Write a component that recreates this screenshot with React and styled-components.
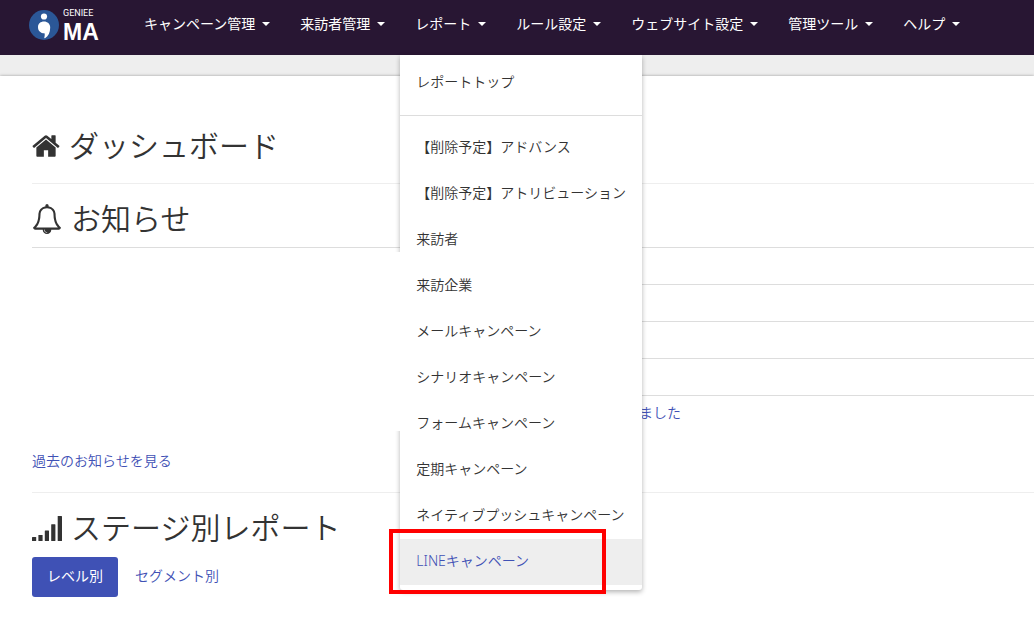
import React from "react";
import styled, { createGlobalStyle } from "styled-components";

const GlobalStyle = createGlobalStyle`
  * { box-sizing: border-box; }
  html { background: #fff; }
  body {
    margin: 0;
    overflow-x: hidden;
    color: #333;
    font: 350 14px/20px "Noto Sans", "Noto Sans CJK JP", sans-serif;
  }
  button { font: inherit; }
  a { color: #3f51b5; text-decoration: none; }
`;

const Navbar = styled.header`
  position: relative;
  z-index: 2;
  display: flex;
  height: 55px;
  padding-left: 29px;
  background: #281633;
  color: #fff;
`;

const Brand = styled.a`
  display: flex;
  gap: 3px;
  width: 100px;
  padding-top: 8px;
  color: #fff;
`;

const BrandMark = styled.svg`
  flex: none;
  width: 31px;
  height: 34px;
`;

const BrandText = styled.span`
  display: flex;
  flex-direction: column;
`;

const BrandCompany = styled.span`
  font-family: Roboto, sans-serif;
  font-weight: 400;
  font-size: 9px;
  line-height: 11px;
`;

const BrandProduct = styled.span`
  font-family: "Liberation Sans", sans-serif;
  font-size: 23px;
  line-height: 26px;
  font-weight: 700;
`;

const NavList = styled.ul`
  display: flex;
  margin: 0;
  padding: 0;
  list-style: none;
`;

const NavItem = styled.li`
  position: relative;
`;

const NavButton = styled.button`
  display: flex;
  align-items: center;
  gap: 7px;
  height: 48px;
  padding: 0 15px;
  border: 0;
  background: none;
  color: inherit;
  font-weight: 400;
  white-space: nowrap;
  cursor: pointer;
`;

const Caret = styled.span`
  border: 4px solid transparent;
  border-top-color: #fff;
  border-bottom: 0;
`;

const Menu = styled.div`
  position: absolute;
  top: 55px;
  left: 0;
  width: 242px;
  padding: 5px 0;
  border-radius: 0 0 3px 3px;
  background: #fff;
  box-shadow: 0 2px 5px rgba(0, 0, 0, 0.3);
`;

const MenuDivider = styled.hr`
  height: 1px;
  margin: 9px 0;
  border: 0;
  background: #ddd;
`;

const MenuLink = styled.a`
  position: relative;
  display: block;
  padding: 12px 16px 14px;
  background: ${(p) => (p.$active ? "#eee" : "transparent")};
  color: ${(p) => (p.$active ? "#3f51b5" : "#333")};
  white-space: nowrap;
`;

const Highlight = styled.span`
  position: absolute;
  top: -10px;
  left: -11px;
  width: 217px;
  height: 65px;
  border: 4px solid #f00;
`;

const Mask = styled.div`
  position: absolute;
  top: 197px;
  right: 100%;
  width: 368px;
  height: 179px;
  background: #fff;
`;

const Backdrop = styled.div`
  padding-top: 21px;
  background: #eee;
`;

const Page = styled.main`
  min-height: calc(100vh - 76px);
  padding: 50px 0 22px 32px;
  background: #fff;
  box-shadow: 0 0 3px rgba(0, 0, 0, 0.35);
`;

const Heading = styled.h2`
  display: flex;
  align-items: center;
  gap: 9px;
  margin: 0;
  font-size: 30px;
  line-height: 40px;
  font-weight: 350;
`;

const HeadingIcon = styled.svg`
  flex: none;
  width: ${(p) => p.$width}px;
  height: 30px;
  fill: #333;
`;

const Rule = styled.hr`
  height: 1px;
  margin: 17px 0 15px;
  border: 0;
  background: #eee;
`;

const NewsTable = styled.table`
  width: 100%;
  margin: 8px 0 19px;
  border-collapse: separate;
  border-spacing: 0;
`;

const NewsCell = styled.td`
  height: 37px;
  padding: 7px 0 9px 607px;
  border-top: 1px solid #ddd;
`;

const PastNews = styled.a`
  display: block;
  margin-bottom: 21px;
`;

const Tabs = styled.div`
  display: flex;
  gap: 2px;
  margin-top: 9px;
`;

const Tab = styled.button`
  height: 40px;
  padding: 0 15px 2px;
  border: 0;
  border-radius: 3px;
  background: ${(p) => (p.$active ? "#3f51b5" : "transparent")};
  color: ${(p) => (p.$active ? "#fff" : "#3f51b5")};
  font-weight: ${(p) => (p.$active ? 400 : 350)};
  cursor: pointer;
`;

const navItems = [
  "キャンペーン管理",
  "来訪者管理",
  "レポート",
  "ルール設定",
  "ウェブサイト設定",
  "管理ツール",
  "ヘルプ",
];

const reports = [
  "【削除予定】アドバンス",
  "【削除予定】アトリビューション",
  "来訪者",
  "来訪企業",
  "メールキャンペーン",
  "シナリオキャンペーン",
  "フォームキャンペーン",
  "定期キャンペーン",
  "ネイティブプッシュキャンペーン",
];

const news = ["", "", "", "", "ました"];

function HomeIcon() {
  return (
    <HeadingIcon $width={28} viewBox="64 0 1664 1792" aria-hidden="true">
      <path d="M1472 992v480q0 26-19 45t-45 19h-384v-384h-256v384h-384q-26 0-45-19t-19-45v-480q0-1 .5-3t.5-3l575-474 575 474q1 2 1 6zm223-69l-62 74q-8 9-21 11h-3q-13 0-21-7l-692-577-692 577q-12 8-24 7-13-2-21-11l-62-74q-8-10-7-23.5t11-21.5l719-599q32-26 76-26t76 26l244 204v-195q0-14 9-23t23-9h192q14 0 23 9t9 23v408l219 182q10 8 11 21.5t-7 23.5z" />
    </HeadingIcon>
  );
}

function BellIcon() {
  return (
    <HeadingIcon $width={30} viewBox="0 0 1792 1792" aria-hidden="true">
      <path d="M912 1696q0-16-16-16-59 0-101.5-42.5t-42.5-101.5q0-16-16-16t-16 16q0 73 51.5 124.5t124.5 51.5q16 0 16-16zm-666-288h1300q-266-300-266-832 0-51-24-105t-69-103-121.5-80.5-169.5-31.5-169.5 31.5-121.5 80.5-69 103-24 105q0 532-266 832zm1482 0q0 52-38 90t-90 38h-448q0 106-75 181t-181 75-181-75-75-181h-448q-52 0-90-38t-38-90q50-42 91-88t85-119.5 74.5-158.5 50-206 19.5-260q0-152 117-282.5t307-158.5q-8-19-8-39 0-40 28-68t68-28 68 28 28 68q0 20-8 39 190 28 307 158.5t117 282.5q0 139 19.5 260t50 206 74.5 158.5 85 119.5 91 88z" />
    </HeadingIcon>
  );
}

function SignalIcon() {
  return (
    <HeadingIcon $width={30} viewBox="0 0 30 30" aria-hidden="true">
      <rect x="0" y="24" width="4.2" height="4" rx=".5" />
      <rect x="6.4" y="22" width="4.2" height="6" rx=".5" />
      <rect x="12.8" y="17.5" width="4.2" height="10.5" rx=".5" />
      <rect x="19.2" y="11.3" width="4.2" height="16.7" rx=".5" />
      <rect x="25.7" y="3" width="4.3" height="25" rx=".5" />
    </HeadingIcon>
  );
}

function ReportMenu() {
  return (
    <Menu>
      <MenuLink href="#top">レポートトップ</MenuLink>
      <MenuDivider />
      {reports.map((label) => (
        <MenuLink href="#report" key={label}>
          {label}
        </MenuLink>
      ))}
      <MenuLink href="#line" $active>
        LINEキャンペーン
        <Highlight />
      </MenuLink>
      <Mask />
    </Menu>
  );
}

export default function App() {
  return (
    <>
      <GlobalStyle />
      <Navbar>
        <Brand href="#home">
          <BrandMark viewBox="0 0 31 34" aria-hidden="true">
            <circle cx="15" cy="17" r="15" fill="#2b5797" />
            <circle cx="15" cy="8.5" r="3.1" fill="#fff" />
            <path
              d="M9 19.200C9 15.700 11.600 13.600 15 13.600s6.200 2.300 6.200 5.900c0 5.100-1.900 8.500-4.900 10.600-.7.4-1.200.1-1-.6.5-1.500.6-2.700.2-4.200C11.500 25.300 9 22.700 9 19.200z"
              fill="#fff"
            />
          </BrandMark>
          <BrandText>
            <BrandCompany>GENIEE</BrandCompany>
            <BrandProduct>MA</BrandProduct>
          </BrandText>
        </Brand>
        <nav>
          <NavList>
            {navItems.map((label) => (
              <NavItem key={label}>
                <NavButton type="button">
                  {label}
                  <Caret />
                </NavButton>
                {label === "レポート" && <ReportMenu />}
              </NavItem>
            ))}
          </NavList>
        </nav>
      </Navbar>
      <Backdrop>
        <Page>
          <Heading as="h1">
            <HomeIcon />
            ダッシュボード
          </Heading>
          <Rule />
          <Heading>
            <BellIcon />
            お知らせ
          </Heading>
          <NewsTable>
            <tbody>
              {news.map((title, i) => (
                <tr key={i}>
                  <NewsCell>{title && <a href="#news">{title}</a>}</NewsCell>
                </tr>
              ))}
            </tbody>
          </NewsTable>
          <PastNews href="#past">過去のお知らせを見る</PastNews>
          <Rule />
          <Heading>
            <SignalIcon />
            ステージ別レポート
          </Heading>
          <Tabs>
            <Tab type="button" $active>
              レベル別
            </Tab>
            <Tab type="button">セグメント別</Tab>
          </Tabs>
        </Page>
      </Backdrop>
    </>
  );
}
